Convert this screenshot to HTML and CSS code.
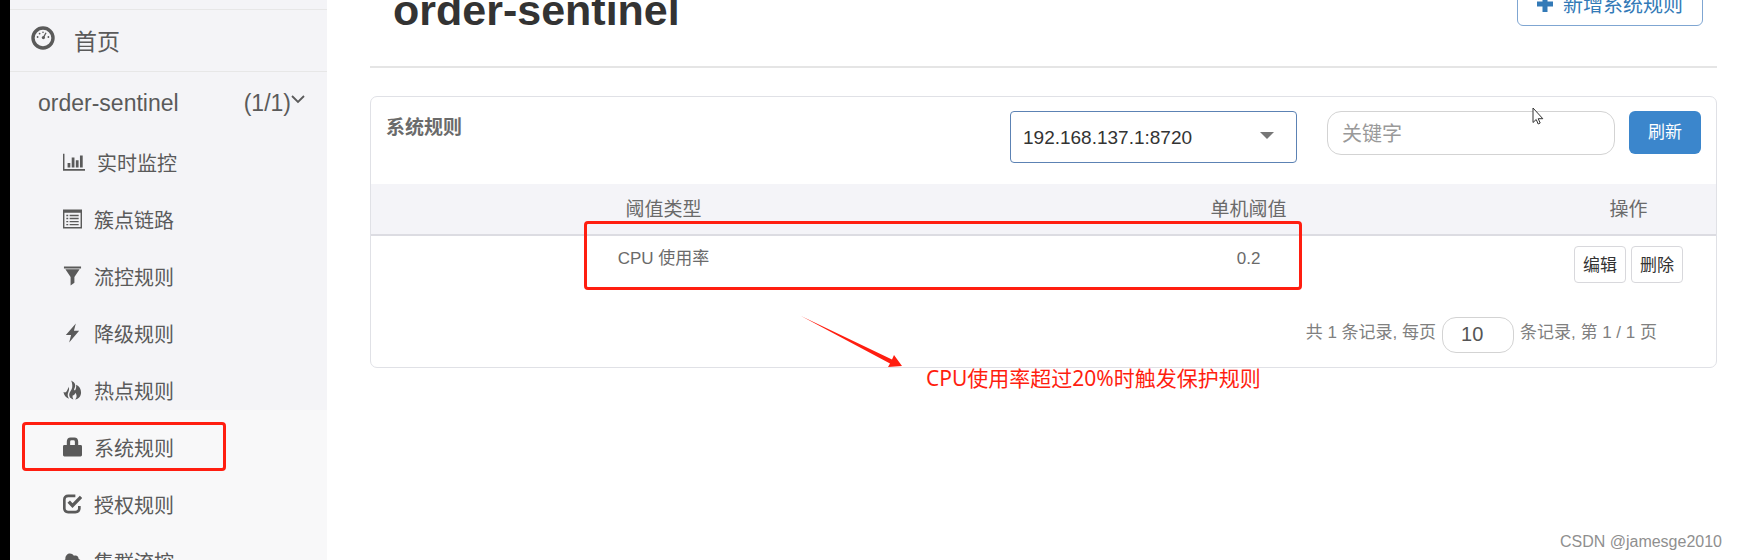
FILE: index.html
```html
<!DOCTYPE html>
<html lang="zh-CN">
<head>
  <meta charset="UTF-8" />
  <meta name="viewport" content="width=device-width, initial-scale=1.0" />
  <title>Sentinel 控制台</title>
  <link rel="stylesheet" href="styles.css">
</head>
<body>
  <div class="layout">
    <!-- Sidebar -->
    <nav class="sidebar">
      <a href="#" class="home">
        <svg class="icon-home" viewBox="0 0 24 24">
          <circle cx="12" cy="12" r="10" fill="none" stroke="currentColor" stroke-width="3.4" />
          <g fill="currentColor">
            <circle cx="6.6" cy="11" r="0.9" /><circle cx="8.6" cy="7.6" r="0.9" />
            <circle cx="12" cy="6.2" r="0.8" /><circle cx="17.4" cy="11" r="0.9" />
            <circle cx="12.4" cy="11.6" r="1.6" />
          </g>
          <path d="M12.400 11.600 L15 6.800" stroke="currentColor" stroke-width="1.3" />
        </svg>
        <span>首页</span>
      </a>
      <a href="#" class="app">
        <span class="app-name">order-sentinel</span>
        <span>(1/1)</span>
        <svg class="icon-arrow" viewBox="0 0 14 10">
          <path d="M1 2 L7 8 L13 2" fill="none" stroke="currentColor" stroke-width="1.8" />
        </svg>
      </a>
      <ul class="menu">
        <li><a href="#">
          <svg class="icon wide" viewBox="0 0 24 20"><path fill="currentColor" d="M0 1h1.600v16.500H24v2H0zM5 11h3v5H5zM9.500 5h3v11h-3zM14 8h3v8h-3zM18.500 3h3v13h-3z" /></svg>
          <span>实时监控</span></a></li>
        <li><a href="#">
          <svg class="icon" viewBox="0 0 20 20"><path fill="currentColor" fill-rule="evenodd" d="M0 0h20v20H0zM1.500 3.500v15h17v-15zM3.500 5.500h2v1.500h-2zM7 5.500h9.500v1.500H7zM3.500 8.800h2v1.500h-2zM7 8.800h9.500v1.500H7zM3.500 12h2v1.500h-2zM7 12h9.500v1.500H7zM3.500 15.200h2v1.500h-2zM7 15.200h9.500v1.500H7z" /></svg>
          <span>簇点链路</span></a></li>
        <li><a href="#">
          <svg class="icon" viewBox="0 0 20 20"><path fill="currentColor" d="M1 0h18v2H1zM2.500 3h15l-5.500 8v6L8 20v-9z" /></svg>
          <span>流控规则</span></a></li>
        <li><a href="#">
          <svg class="icon" viewBox="0 0 20 20"><path fill="currentColor" d="M13.500 0L3 12h5.500L6.500 20 17 7.500h-5.500z" /></svg>
          <span>降级规则</span></a></li>
        <li><a href="#">
          <svg class="icon" viewBox="0 0 20 20"><path fill="currentColor" d="M8.500 0c5 2.500 5 5.500 3.500 8.500-1 2 .5 2.500 1.200 1C14 7.800 14 6 13.800 4.500 17.200 6 19 9 19 12.500c0 4-2.500 6.500-6.200 7.500 2-2 2-4.500.2-7-.6 2-1.500 2.800-2.800 2.800-.4 1.500 0 3 .8 4.200C7 19 5.800 16 7 13c1.300-2.800 3-4.500 2.800-7.500C9.700 3 9.300 1.500 8.500 0zM6 6.500c.8 2.500.3 4-.5 6-.9 2.300-.7 4.500 1 6.700C3 18 1 15.500.5 12c1.800 1 2.800.5 3.500-1C4.700 9.500 5.500 8.500 6 6.500z" /></svg>
          <span>热点规则</span></a></li>
        <li class="active"><a href="#">
          <svg class="icon" viewBox="0 0 20 20"><path fill="currentColor" fill-rule="evenodd" d="M4 8V4.500C4 1.500 5.500 0 8 0h4c2.500 0 4 1.500 4 4.500V8h2.500Q20 8 20 9.500v9q0 1.500-1.500 1.500h-17Q0 20 0 18.500v-9Q0 8 1.500 8zM7.500 8h5V4.500Q12.500 3 11 3H9Q7.500 3 7.500 4.500z" /></svg>
          <span>系统规则</span></a></li>
        <li><a href="#">
          <svg class="icon" viewBox="0 0 20 20"><path fill="none" stroke="currentColor" stroke-width="2.800" d="M13 1.500H5.500Q1.400 1.500 1.400 5.500v9Q1.400 18.500 5.500 18.500h7.500q4.200 0 4.200-4V12" /><path fill="none" stroke="currentColor" stroke-width="3.600" d="M6 7.500l4 4.200L19 2.500" /></svg>
          <span>授权规则</span></a></li>
        <li><a href="#">
          <svg class="icon" viewBox="0 0 20 20"><path fill="currentColor" d="M5 16.500c-6 0-6-7-2.500-8C2 2 8.500 0 11.500 4.500c3-1 5 1 5 3.500 5 1.500 4 8.500-.5 8.500z" /></svg>
          <span>集群流控</span></a></li>
      </ul>
    </nav>

    <!-- Content -->
    <main class="content">
      <header class="page-header">
        <h1>order-sentinel</h1>
        <button type="button" class="btn-add">
          <svg viewBox="0 0 16 16"><path fill="currentColor" d="M5.500 0h5v5.500H16v5h-5.500V16h-5v-5.500H0v-5h5.500z" /></svg>
          新增系统规则
        </button>
      </header>

      <section class="panel">
        <div class="toolbar">
          <h2>系统规则</h2>
          <div class="select-box">
            <select aria-label="机器">
              <option>192.168.137.1:8720</option>
            </select>
          </div>
          <input type="text" class="search" placeholder="关键字" aria-label="关键字" />
          <button type="button" class="btn-refresh">刷新</button>
        </div>
        <table class="rules">
          <thead>
            <tr>
              <th class="col-type">阈值类型</th>
              <th class="col-value">单机阈值</th>
              <th>操作</th>
            </tr>
          </thead>
          <tbody>
            <tr>
              <td>CPU 使用率</td>
              <td>0.2</td>
              <td>
                <div class="actions">
                  <button type="button">编辑</button>
                  <button type="button">删除</button>
                </div>
              </td>
            </tr>
          </tbody>
        </table>
        <div class="pagination">
          <label for="pageSize">共 1 条记录, 每页</label>
          <input type="text" id="pageSize" value="10" />
          <span>条记录, 第 1 / 1 页</span>
        </div>
        <div class="mark-row"></div>
        <div class="note">
          <svg viewBox="0 0 102 52">
            <path fill="#ff1e10" d="M0 0L91 43.500 93 39 101 50 87 51 89 47.500z" />
          </svg>
          <span>CPU使用率超过20%时触发保护规则</span>
        </div>
      </section>
    </main>
  </div>

  <svg class="cursor" viewBox="0 0 12 19">
    <path d="M1 1v14.500l3.200-3 2 4.500 2-1-2-4.300h4.600z" fill="#fff" stroke="#333" />
  </svg>
  <div class="watermark">CSDN @jamesge2010</div>
</body>
</html>
```
FILE: styles.css
```css
*, *::after {
  box-sizing: border-box;
}
body {
  margin: 0;
  height: 100vh;
  overflow: hidden;
  position: relative;
  font-family: "Liberation Sans", "Noto Sans CJK SC", sans-serif;
  font-size: 17px;
  color: #6a6a6a;
  background: #fff;
}
button, input, select {
  font-family: inherit;
}
a {
  color: inherit;
  text-decoration: none;
}
.layout {
  display: flex;
  height: 100%;
  border-left: 10px solid #000;
}

/* Sidebar */
.sidebar {
  flex: 0 0 317px;
  padding-top: 9px;
  overflow: hidden;
  color: #5a5a5a;
  background: linear-gradient(#f4f4f7 410px, #f8f8f9 410px);
}
.home {
  display: flex;
  align-items: center;
  gap: 19px;
  height: 63px;
  padding: 0 21px 2px;
  font-size: 23px;
  border-top: 1px solid #e7e7e7;
  border-bottom: 1px solid #e7e7e7;
}
.icon-home {
  width: 24px;
  height: 24px;
  margin-bottom: 4px;
}
.app {
  display: flex;
  align-items: center;
  height: 62px;
  padding: 0 22px 0 28px;
  font-size: 23px;
}
.app-name {
  flex: 1;
}
.icon-arrow {
  width: 14px;
  height: 10px;
  margin-bottom: 8px;
}
.menu {
  margin: 0;
  padding: 0;
  list-style: none;
  font-size: 20px;
}
.menu a {
  display: flex;
  align-items: center;
  gap: 12px;
  height: 57px;
  padding: 0 0 0 53px;
}
.icon {
  width: 19px;
  height: 20px;
  margin-bottom: 1px;
}
.icon.wide {
  width: 22px;
}
.active {
  position: relative;
}
.active::after {
  content: "";
  position: absolute;
  left: 12px;
  top: 3px;
  width: 204px;
  height: 49px;
  border: 3px solid #ff1e10;
  border-radius: 4px;
}

/* Content */
.content {
  flex: 1;
  padding: 0 20px 0 43px;
}
.page-header {
  display: flex;
  justify-content: space-between;
  align-items: flex-start;
  height: 87px;
  margin: -19px 0 28px;
  padding: 0 14px 0 23px;
  border-bottom: 2px solid #e5e5e5;
}
h1 {
  margin: 4px 0 0;
  font-size: 43px;
  line-height: 50px;
  color: #333;
}
.btn-add {
  display: flex;
  align-items: center;
  gap: 10px;
  height: 45px;
  padding: 0 19px;
  font-size: 20px;
  color: #337ab7;
  background: #fff;
  border: 1px solid #7fa6d2;
  border-radius: 6px;
}
.btn-add svg {
  width: 16px;
  height: 16px;
}
.panel {
  position: relative;
  border: 1px solid #e0e1e6;
  border-radius: 7px;
}
.toolbar {
  display: flex;
  align-items: flex-start;
  height: 87px;
  padding: 14px 15px 0;
}
h2 {
  flex: 1;
  margin: 0;
  font-size: 19px;
  line-height: 34px;
}
.select-box {
  position: relative;
  width: 287px;
  margin-right: 30px;
}
.select-box::after {
  content: "";
  position: absolute;
  right: 23px;
  top: 21px;
  border: 7px solid transparent;
  border-top-color: #777;
  border-bottom: 0;
  pointer-events: none;
}
.select-box select {
  appearance: none;
  width: 100%;
  height: 52px;
  padding: 0 12px;
  font-size: 19px;
  color: #333;
  background: #fff;
  border: 1px solid #5c82b4;
  border-radius: 4px;
}
.search {
  width: 288px;
  height: 44px;
  margin-right: 14px;
  padding: 2px 14px 0;
  font-size: 20px;
  border: 1px solid #d3d3d3;
  border-radius: 14px;
}
.search::placeholder {
  color: #999;
}
.btn-refresh {
  width: 72px;
  height: 43px;
  padding: 0 0 4px;
  font-size: 17px;
  color: #fff;
  background: #3b86cc;
  border: 0;
  border-radius: 6px;
}
.rules {
  width: 100%;
  table-layout: fixed;
  border-collapse: collapse;
  text-align: center;
}
.rules th {
  height: 51px;
  padding: 0 0 4px;
  font-size: 19px;
  font-weight: normal;
  background: #f4f4f8;
  border-bottom: 2px solid #dcdce2;
}
.col-type, .col-value {
  width: 43.5%;
}
.rules td {
  padding: 10px 0 22px;
  line-height: 26px;
  vertical-align: top;
}
.actions {
  display: flex;
  justify-content: center;
  gap: 5px;
}
.actions button {
  width: 52px;
  height: 37px;
  padding: 0 0 2px;
  font-size: 17px;
  color: #333;
  background: #fff;
  border: 1px solid #d8d8dc;
  border-radius: 4px;
}
.pagination {
  display: flex;
  justify-content: flex-end;
  align-items: center;
  gap: 6px;
  padding: 12px 59px 14px;
  line-height: 24px;
  color: #808080;
}
.pagination label, .pagination span {
  padding-bottom: 4px;
}
.pagination input {
  width: 72px;
  height: 36px;
  padding: 0 18px 2px;
  font-size: 20px;
  color: #555;
  border: 1px solid #d3d3d3;
  border-radius: 14px;
}

/* Annotations */
.mark-row {
  position: absolute;
  left: 213px;
  top: 124px;
  width: 718px;
  height: 69px;
  border: 3px solid #ff1e10;
  border-radius: 4px;
}
.note {
  position: absolute;
  left: 430px;
  top: 219px;
  display: flex;
  align-items: flex-start;
  gap: 23px;
  font-family: "Noto Sans", "Noto Sans CJK SC", sans-serif;
  font-size: 21px;
  line-height: 30px;
  color: #ff1e10;
  white-space: nowrap;
}
.note svg {
  width: 102px;
  height: 52px;
}
.note span {
  margin-top: 47px;
}
.cursor {
  position: absolute;
  right: 193px;
  top: 107px;
  width: 12px;
  height: 19px;
}
.watermark {
  position: absolute;
  right: 15px;
  bottom: 7px;
  font-size: 16px;
  line-height: 22px;
  color: #8f8f8f;
}
```
